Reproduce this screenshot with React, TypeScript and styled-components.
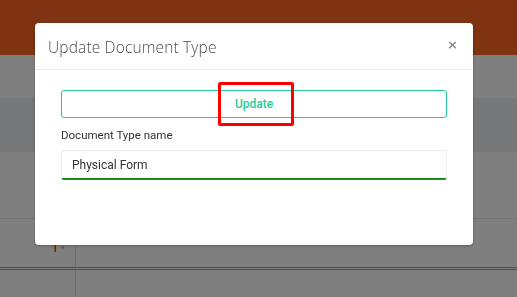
import styled, { createGlobalStyle } from "styled-components";

const GlobalStyle = createGlobalStyle`
  html, body {
    margin: 0;
    padding: 0;
    width: 517px;
    height: 297px;
    overflow: hidden;
    font-family: Roboto, "Liberation Sans", sans-serif;
  }
  * { box-sizing: border-box; }
`;

export default function App() {
  return (
    <>
      <GlobalStyle />
      <Page>
        <TopBar />
        <Toolbar />
        <TableHead />
        <TableRow $height={67} $divider>
          <RowMarker />
          <RowCell />
        </TableRow>
        <TableRow $height={48}>
          <RowMarker>
            <Tick />
            <Caret>▾</Caret>
          </RowMarker>
          <RowCell />
        </TableRow>
        <DoubleRule />
        <Footer>
          <FooterCell />
        </Footer>
      </Page>

      <Backdrop>
        <Modal>
          <ModalHeader>
            <ModalTitle>Update Document Type</ModalTitle>
            <CloseButton aria-label="close">×</CloseButton>
          </ModalHeader>
          <ModalBody>
            <UpdateButton>
              Update
              <Highlight />
            </UpdateButton>
            <Field>
              <Label>Document Type name</Label>
              <Input defaultValue="Physical Form" />
            </Field>
          </ModalBody>
        </Modal>
      </Backdrop>
    </>
  );
}

const Page = styled.div`
  width: 517px;
  height: 297px;
  display: flex;
  flex-direction: column;
  background: #ffffff;
`;

const TopBar = styled.header`
  height: 55px;
  flex-shrink: 0;
  background: #ff6725;
`;

const Toolbar = styled.div`
  height: 43px;
  flex-shrink: 0;
  background: #ffffff;
`;

const TableHead = styled.div`
  height: 54px;
  flex-shrink: 0;
  background: #eceef3;
`;

const TableRow = styled.div<{ $height: number; $divider?: boolean }>`
  height: ${(p) => p.$height}px;
  flex-shrink: 0;
  display: flex;
  border-bottom: ${(p) => (p.$divider ? "1px solid #e6e6e6" : "none")};
`;

const RowMarker = styled.div`
  width: 76px;
  display: flex;
  align-items: flex-start;
  justify-content: flex-end;
  gap: 5px;
  padding: 26px 10px 0 0;
  border-right: 1px solid #dcdcdc;
`;

const Tick = styled.span`
  width: 2px;
  height: 7px;
  background: linear-gradient(90deg, #f09a2a 50%, #3a7bd5 50%);
`;

const Caret = styled.span`
  font-size: 7px;
  line-height: 7px;
  color: #bbbbbb;
`;

const RowCell = styled.div`
  flex: 1;
`;

const DoubleRule = styled.div`
  height: 3px;
  flex-shrink: 0;
  border-top: 1px solid #38bff8;
  border-bottom: 1px solid #38bff8;
  background: #ffffff;
`;

const Footer = styled.div`
  flex: 1;
  display: flex;
`;

const FooterCell = styled.div`
  width: 76px;
  border-right: 1px solid #dcdcdc;
`;

const Backdrop = styled.div`
  position: fixed;
  inset: 0;
  background: rgba(0, 0, 0, 0.5);
  padding: 23px 0 0 35px;
`;

const Modal = styled.div`
  width: 438px;
  height: 222px;
  background: #ffffff;
  border-radius: 4px;
  box-shadow: 0 1px 3px rgba(0, 0, 0, 0.3);
  display: flex;
  flex-direction: column;
`;

const ModalHeader = styled.div`
  height: 47px;
  display: flex;
  align-items: center;
  justify-content: space-between;
  padding: 0 15px 0 13px;
  border-bottom: 1px solid #e9ecef;
`;

const ModalTitle = styled.h5`
  margin: 0;
  padding-top: 1px;
  font-family: "Open Sans", "Liberation Sans", sans-serif;
  font-weight: 300;
  font-size: 15.5px;
  color: #4a4a4a;
  letter-spacing: 0.15px;
`;

const CloseButton = styled.button`
  border: none;
  background: none;
  padding: 0;
  margin-top: -3px;
  font-family: "DejaVu Sans", sans-serif;
  font-size: 13px;
  font-weight: 700;
  color: #8a8a8a;
  line-height: 1;
`;

const ModalBody = styled.div`
  padding: 20px 26px 0 26px;
  display: flex;
  flex-direction: column;
  gap: 10px;
`;

const UpdateButton = styled.button`
  position: relative;
  height: 28px;
  width: 100%;
  border: 1px solid #20c997;
  border-radius: 3px;
  background: #ffffff;
  color: #2ccb96;
  font-family: Roboto, "Liberation Sans", sans-serif;
  font-weight: 500;
  font-size: 12px;
`;

const Highlight = styled.span`
  position: absolute;
  left: 156px;
  top: -9px;
  width: 76px;
  height: 44px;
  border: 3px solid #ff0000;
  border-radius: 2px;
`;

const Field = styled.div`
  display: flex;
  flex-direction: column;
  gap: 8px;
`;

const Label = styled.label`
  font-size: 11.5px;
  color: #333333;
`;

const Input = styled.input`
  height: 30px;
  width: 100%;
  border: 1px solid #eeeeee;
  border-bottom: 2px solid #1a8a1a;
  border-radius: 3px;
  padding: 0 10px;
  font-family: Roboto, "Liberation Sans", sans-serif;
  font-size: 12px;
  color: #333333;
  outline: none;
`;
